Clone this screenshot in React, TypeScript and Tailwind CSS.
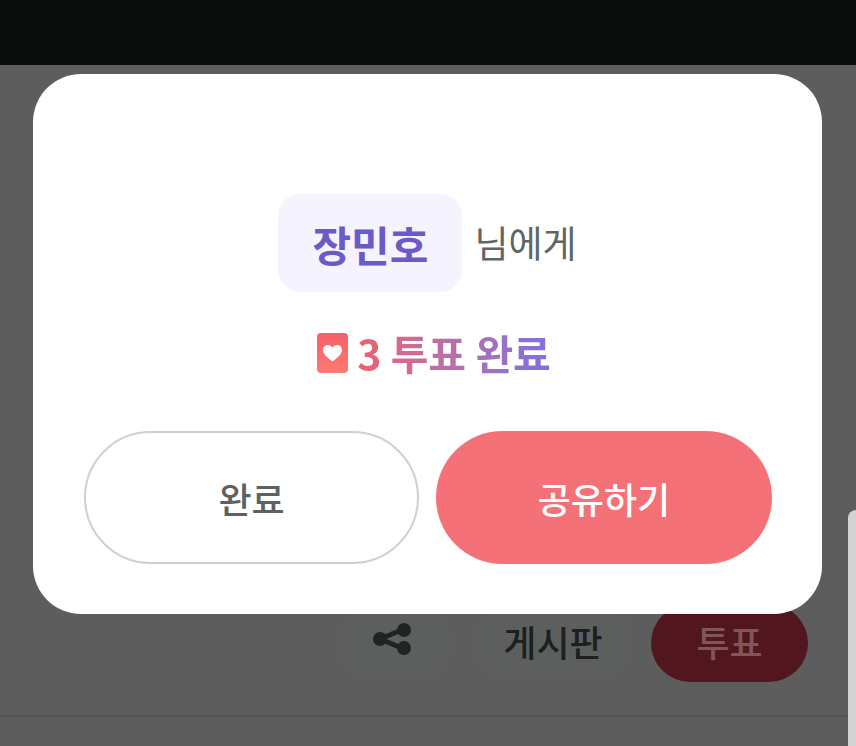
import React from 'react';

const font = "font-['Noto_Sans_CJK_KR','Noto_Sans',sans-serif]";

function ShareIcon() {
  return (
    <svg width="44" height="36" viewBox="0 0 44 36" fill="#1f2322" stroke="#1f2322">
      <path d="M10 18 L34 8 M10 18 L34 28" strokeWidth="5" fill="none" />
      <circle cx="10" cy="18" r="7" stroke="none" />
      <circle cx="34" cy="9" r="7" stroke="none" />
      <circle cx="34" cy="27" r="7" stroke="none" />
    </svg>
  );
}

function HeartCard() {
  return (
    <svg width="31" height="40" viewBox="0 0 31 40" className="shrink-0">
      <defs>
        <linearGradient id="card" x1="0" y1="0" x2="0" y2="1">
          <stop offset="0" stopColor="#f65f69" />
          <stop offset="1" stopColor="#fb7a72" />
        </linearGradient>
      </defs>
      <rect width="31" height="40" rx="4" fill="url(#card)" />
      <path
        d="M15.5 28.5 C10 24.5 6 21 6 16.8 C6 13.8 8.5 12 11 12 C13 12 14.7 13.2 15.5 14.8 C16.3 13.2 18 12 20 12 C22.5 12 25 13.8 25 16.8 C25 21 21 24.5 15.5 28.5 Z"
        fill="#ffffff"
      />
    </svg>
  );
}

export default function App() {
  return (
    <div className={`relative flex h-[746px] w-[856px] flex-col overflow-hidden bg-[#5c5d5c] ${font}`}>
      <div className="h-[65px] shrink-0 bg-[#0a0c0c]" />

      {/* page behind the dimmed layer */}
      <div className="h-[325px] shrink-0 border-b border-[#585958]" />
      <div className="flex h-[327px] shrink-0 items-end justify-end gap-[17px] border-b-2 border-[#525352] pb-[33px] pr-[48px]">
        <button className="mr-[3px] flex h-[78px] w-[116px] items-center justify-center rounded-[36px] bg-[#5d5f5e] pb-[9px] pr-[5px]">
          <ShareIcon />
        </button>
        <button className="h-[78px] w-[162px] rounded-[36px] bg-[#5d5f5e] pb-[4px] text-[36px] font-medium text-[#1c201f]">
          게시판
        </button>
        <button className="h-[78px] w-[157px] rounded-[39px] bg-[#52161f] pb-[4px] text-[36px] font-medium text-[#80565a]">
          투표
        </button>
      </div>

      {/* scrollbar */}
      <div className="absolute bottom-0 right-0 h-[236px] w-[8px] rounded-tl-[8px] bg-[#d2d2d2]" />

      {/* dialog */}
      <div className="absolute left-[33px] top-[74px] flex h-[540px] w-[789px] flex-col items-center rounded-[48px] bg-white pl-[51px] pr-[50px] pt-[120px]">
        <div className="flex items-center gap-[12px] pr-[1px]">
          <span className="flex h-[98px] w-[184px] items-center justify-center rounded-[22px] bg-[#f5f3fd] text-[42px] font-semibold text-[#6b5bc9]">
            장민호
          </span>
          <span className="text-[37px] font-normal text-[#5f6664]">님에게</span>
        </div>

        <div className="mt-[41px] flex h-[40px] items-center gap-[9px] pl-[12px]">
          <HeartCard />
          <span className="bg-gradient-to-r from-[#ee5f6e] to-[#7d6fe2] bg-clip-text text-[41px] font-semibold text-transparent">
            3 투표 완료
          </span>
        </div>

        <div className="mt-[58px] flex w-full gap-[17px]">
          <button className="h-[133px] w-[335px] rounded-[67px] border-2 border-[#d0d0d0] bg-white text-[36px] font-medium text-[#5b6362]">
            완료
          </button>
          <button className="h-[133px] flex-1 rounded-[67px] bg-[#f47277] text-[36px] font-medium text-white">
            공유하기
          </button>
        </div>
      </div>
    </div>
  );
}
